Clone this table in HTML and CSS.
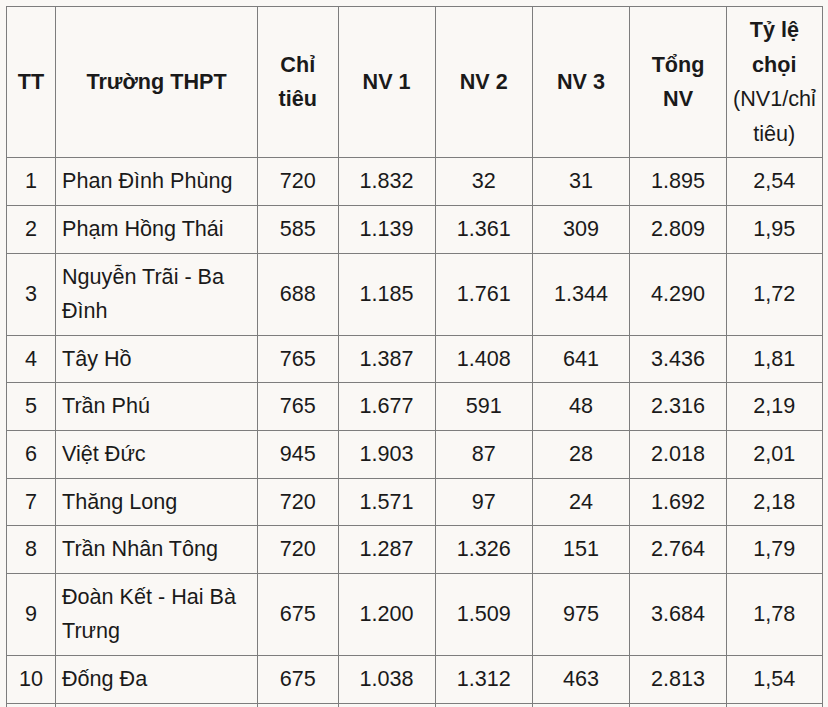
FILE: index.html
```html
<!DOCTYPE html>
<html lang="vi">
<head>
<meta charset="utf-8">
<title>Tỷ lệ chọi</title>
<link rel="stylesheet" href="styles.css">
</head>
<body>
<table class="ratio-table">
  <colgroup>
    <col class="c-tt"><col class="c-name"><col class="c-quota"><col class="c-nv"><col class="c-nv"><col class="c-nv"><col class="c-total"><col class="c-rate">
  </colgroup>
  <thead>
    <tr>
      <th>TT</th>
      <th>Trường THPT</th>
      <th>Chỉ tiêu</th>
      <th>NV 1</th>
      <th>NV 2</th>
      <th>NV 3</th>
      <th>Tổng NV</th>
      <th>Tỷ lệ chọi <span class="note">(NV1/chỉ tiêu)</span></th>
    </tr>
  </thead>
  <tbody>
    <tr><td>1</td><td class="name">Phan Đình Phùng</td><td>720</td><td>1.832</td><td>32</td><td>31</td><td>1.895</td><td>2,54</td></tr>
    <tr><td>2</td><td class="name">Phạm Hồng Thái</td><td>585</td><td>1.139</td><td>1.361</td><td>309</td><td>2.809</td><td>1,95</td></tr>
    <tr><td>3</td><td class="name">Nguyễn Trãi - Ba Đình</td><td>688</td><td>1.185</td><td>1.761</td><td>1.344</td><td>4.290</td><td>1,72</td></tr>
    <tr><td>4</td><td class="name">Tây Hồ</td><td>765</td><td>1.387</td><td>1.408</td><td>641</td><td>3.436</td><td>1,81</td></tr>
    <tr><td>5</td><td class="name">Trần Phú</td><td>765</td><td>1.677</td><td>591</td><td>48</td><td>2.316</td><td>2,19</td></tr>
    <tr><td>6</td><td class="name">Việt Đức</td><td>945</td><td>1.903</td><td>87</td><td>28</td><td>2.018</td><td>2,01</td></tr>
    <tr><td>7</td><td class="name">Thăng Long</td><td>720</td><td>1.571</td><td>97</td><td>24</td><td>1.692</td><td>2,18</td></tr>
    <tr><td>8</td><td class="name">Trần Nhân Tông</td><td>720</td><td>1.287</td><td>1.326</td><td>151</td><td>2.764</td><td>1,79</td></tr>
    <tr><td>9</td><td class="name">Đoàn Kết - Hai Bà Trưng</td><td>675</td><td>1.200</td><td>1.509</td><td>975</td><td>3.684</td><td>1,78</td></tr>
    <tr><td>10</td><td class="name">Đống Đa</td><td>675</td><td>1.038</td><td>1.312</td><td>463</td><td>2.813</td><td>1,54</td></tr>
    <tr class="next-row"><td></td><td></td><td></td><td></td><td></td><td></td><td></td><td></td></tr>
  </tbody>
</table>
</body>
</html>
```

FILE: styles.css
```css
html, body {
  margin: 0;
  background: #faf8f5;
}
body {
  padding: 6px 0 0 6px;
  font-family: "Liberation Sans", Arial, sans-serif;
  color: #1a1a1a;
}
.ratio-table {
  border-collapse: collapse;
  table-layout: fixed;
  width: 815.5px;
  font-size: 21.6px;
  line-height: 34.6px;
}
.c-tt { width: 49px; }
.c-name { width: 202px; }
.c-quota { width: 80.5px; }
.c-nv { width: 97.2px; }
.c-total { width: 97px; }
.c-rate { width: 95.5px; }
.ratio-table th,
.ratio-table td {
  border: 1px solid #7d7d7d;
  padding: 6px 6px;
  text-align: center;
  vertical-align: middle;
}
.ratio-table th {
  font-weight: bold;
}
.ratio-table .note {
  font-weight: normal;
}
.ratio-table td.name {
  text-align: left;
}
.ratio-table .next-row td {
  height: 34.6px;
}
```
